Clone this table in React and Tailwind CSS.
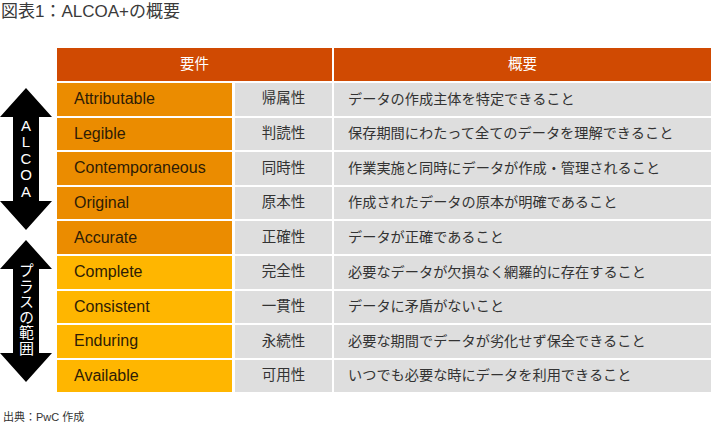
const rows = [
  { en: 'Attributable', ja: '帰属性', desc: 'データの作成主体を特定できること', plus: false },
  { en: 'Legible', ja: '判読性', desc: '保存期間にわたって全てのデータを理解できること', plus: false },
  { en: 'Contemporaneous', ja: '同時性', desc: '作業実施と同時にデータが作成・管理されること', plus: false },
  { en: 'Original', ja: '原本性', desc: '作成されたデータの原本が明確であること', plus: false },
  { en: 'Accurate', ja: '正確性', desc: 'データが正確であること', plus: false },
  { en: 'Complete', ja: '完全性', desc: '必要なデータが欠損なく網羅的に存在すること', plus: true },
  { en: 'Consistent', ja: '一貫性', desc: 'データに矛盾がないこと', plus: true },
  { en: 'Enduring', ja: '永続性', desc: '必要な期間でデータが劣化せず保全できること', plus: true },
  { en: 'Available', ja: '可用性', desc: 'いつでも必要な時にデータを利用できること', plus: true },
];

function DoubleArrow({ children }) {
  return (
    <div className="relative h-[142px] w-[52px]">
      <svg width="52" height="142" viewBox="0 0 52 142" className="block">
        <path d="M26 0 L52 29 L39 29 L39 113 L52 113 L26 142 L0 113 L13 113 L13 29 L0 29 Z" fill="#000" />
      </svg>
      <div className="absolute inset-0 flex items-center justify-center text-white">{children}</div>
    </div>
  );
}

export default function App() {
  return (
    <div className="w-[713px] h-[430px] bg-white font-['Liberation_Sans','Noto_Sans_CJK_JP',sans-serif] text-[#333]">
      <div className="pl-[1px] pt-[1px] text-[17px] leading-[22px] text-[#3a3a3a]">図表1：ALCOA+の概要</div>

      <div className="flex mt-[25px]">
        <div className="w-[52px] mr-[5px] pt-[40px] flex flex-col gap-[10px]">
          <DoubleArrow>
            <div className="flex flex-col items-center text-[15px] leading-[16.5px]">
              <span>A</span>
              <span>L</span>
              <span>C</span>
              <span>O</span>
              <span>A</span>
            </div>
          </DoubleArrow>
          <DoubleArrow>
            <div className="[writing-mode:vertical-rl] text-[15px] leading-[16px] tracking-[0.5px] mt-[-3px] font-['Noto_Sans_CJK_JP',sans-serif]">
              プラスの範囲
            </div>
          </DoubleArrow>
        </div>

        <div className="w-[654px] flex flex-col gap-[2px]">
          <div className="flex gap-[2px] h-[33px] text-white text-[14.5px]">
            <div className="w-[275px] bg-[#d04a02] flex items-center justify-center">要件</div>
            <div className="flex-1 bg-[#d04a02] flex items-center justify-center">概要</div>
          </div>
          {rows.map((r) => (
            <div key={r.en} className="flex h-[32.6px]">
              <div
                className={
                  'w-[175px] mr-[3px] flex items-center pl-[17px] text-[16px] text-[#2e1c06] ' +
                  (r.plus ? 'bg-[#ffb600]' : 'bg-[#eb8c00]')
                }
              >
                {r.en}
              </div>
              <div className="w-[97px] mr-[2px] bg-[#dedede] flex items-center justify-center text-[#333] text-[14.5px]">
                {r.ja}
              </div>
              <div className="flex-1 bg-[#dedede] flex items-center pl-[14px] text-[#333] text-[14.2px]">
                {r.desc}
              </div>
            </div>
          ))}
        </div>
      </div>

      <div className="pl-[3px] mt-[17px] text-[11px] text-[#333]">出典：PwC 作成</div>
    </div>
  );
}
